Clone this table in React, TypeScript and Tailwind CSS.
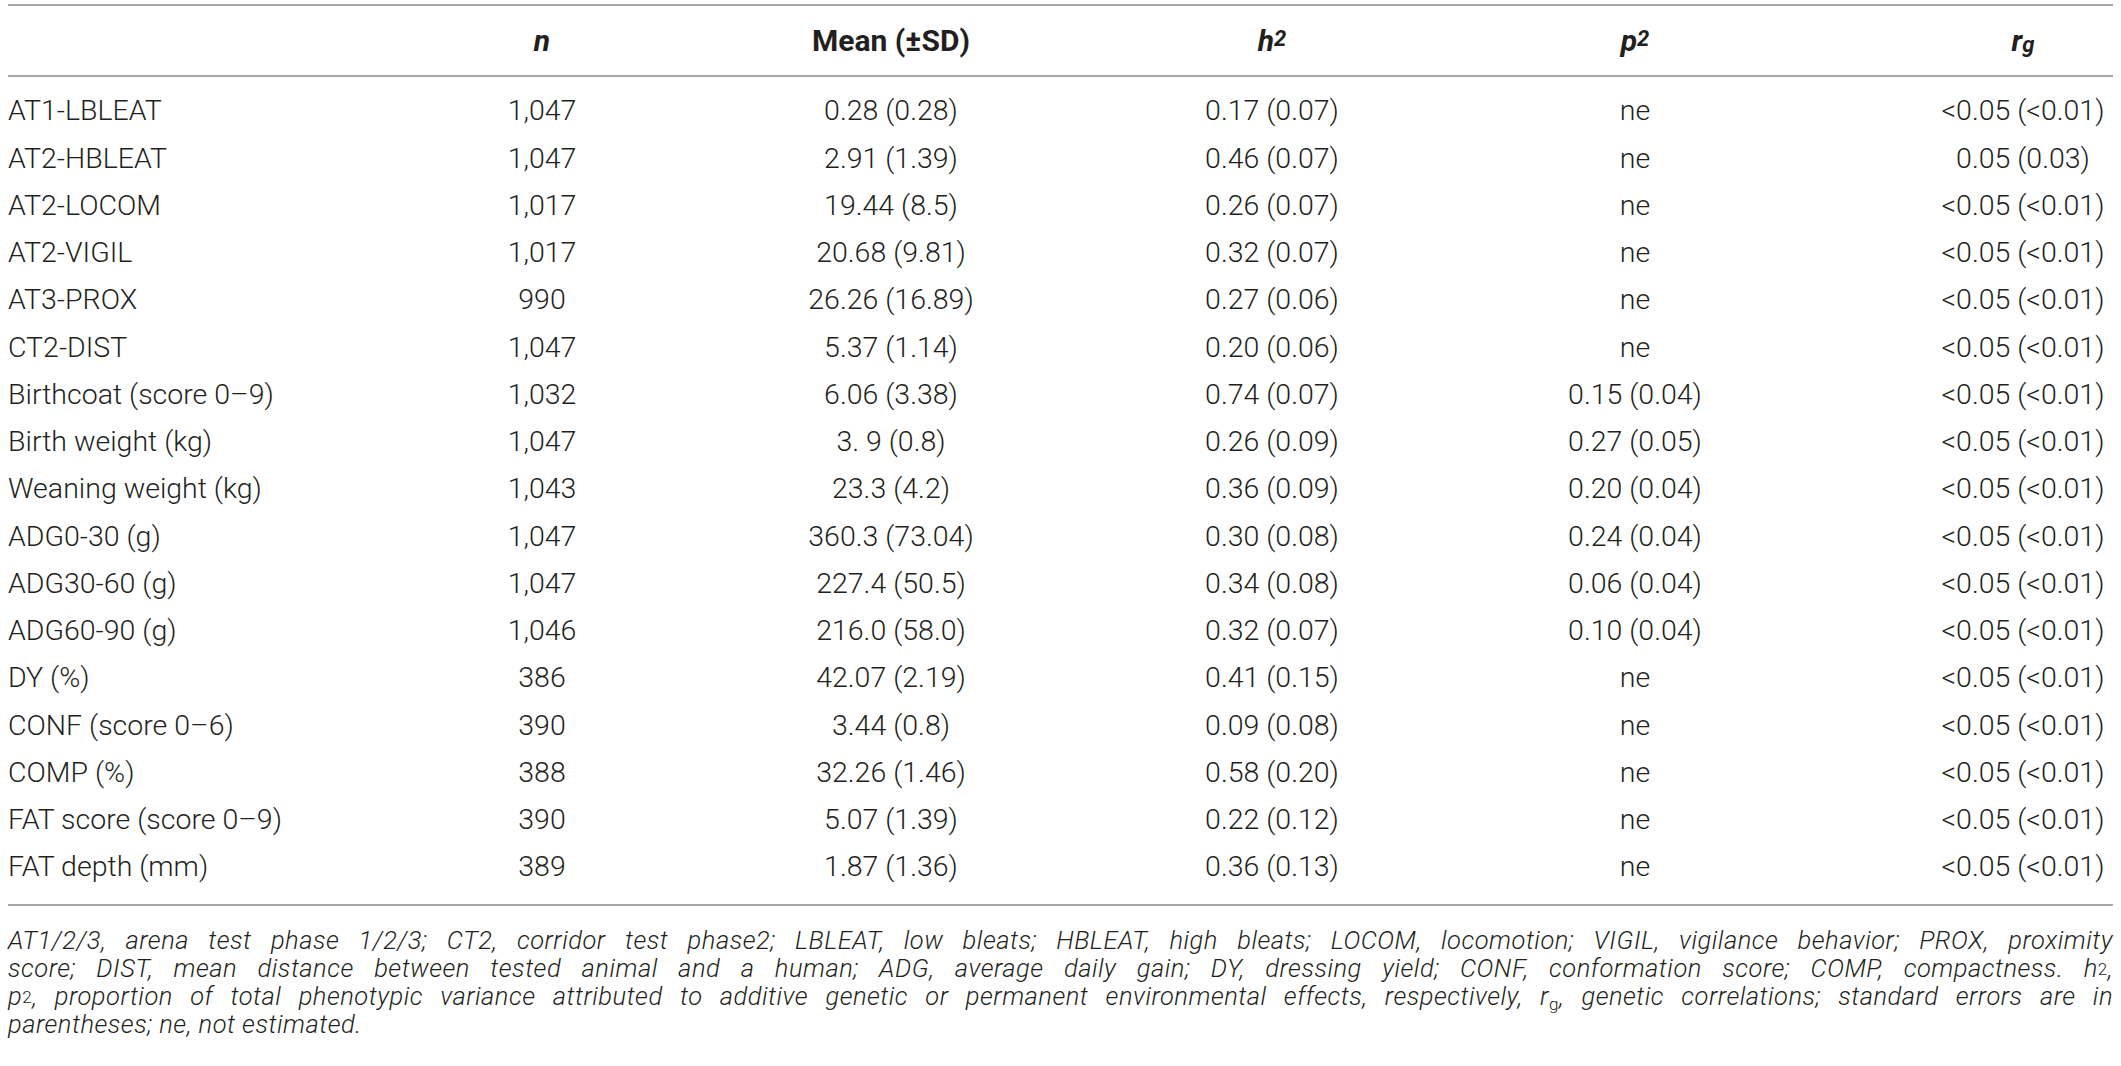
import React from "react";

type Row = [string, string, string, string, string, string];

const rows: Row[] = [
  ["AT1-LBLEAT", "1,047", "0.28 (0.28)", "0.17 (0.07)", "ne", "<0.05 (<0.01)"],
  ["AT2-HBLEAT", "1,047", "2.91 (1.39)", "0.46 (0.07)", "ne", "0.05 (0.03)"],
  ["AT2-LOCOM", "1,017", "19.44 (8.5)", "0.26 (0.07)", "ne", "<0.05 (<0.01)"],
  ["AT2-VIGIL", "1,017", "20.68 (9.81)", "0.32 (0.07)", "ne", "<0.05 (<0.01)"],
  ["AT3-PROX", "990", "26.26 (16.89)", "0.27 (0.06)", "ne", "<0.05 (<0.01)"],
  ["CT2-DIST", "1,047", "5.37 (1.14)", "0.20 (0.06)", "ne", "<0.05 (<0.01)"],
  ["Birthcoat (score 0–9)", "1,032", "6.06 (3.38)", "0.74 (0.07)", "0.15 (0.04)", "<0.05 (<0.01)"],
  ["Birth weight (kg)", "1,047", "3. 9 (0.8)", "0.26 (0.09)", "0.27 (0.05)", "<0.05 (<0.01)"],
  ["Weaning weight (kg)", "1,043", "23.3 (4.2)", "0.36 (0.09)", "0.20 (0.04)", "<0.05 (<0.01)"],
  ["ADG0-30 (g)", "1,047", "360.3 (73.04)", "0.30 (0.08)", "0.24 (0.04)", "<0.05 (<0.01)"],
  ["ADG30-60 (g)", "1,047", "227.4 (50.5)", "0.34 (0.08)", "0.06 (0.04)", "<0.05 (<0.01)"],
  ["ADG60-90 (g)", "1,046", "216.0 (58.0)", "0.32 (0.07)", "0.10 (0.04)", "<0.05 (<0.01)"],
  ["DY (%)", "386", "42.07 (2.19)", "0.41 (0.15)", "ne", "<0.05 (<0.01)"],
  ["CONF (score 0–6)", "390", "3.44 (0.8)", "0.09 (0.08)", "ne", "<0.05 (<0.01)"],
  ["COMP (%)", "388", "32.26 (1.46)", "0.58 (0.20)", "ne", "<0.05 (<0.01)"],
  ["FAT score (score 0–9)", "390", "5.07 (1.39)", "0.22 (0.12)", "ne", "<0.05 (<0.01)"],
  ["FAT depth (mm)", "389", "1.87 (1.36)", "0.36 (0.13)", "ne", "<0.05 (<0.01)"],
];

const gridCols = "grid grid-cols-[501px_66px_632px_130px_596px_180px]";

function Rule() {
  return <div className="h-[2px] bg-[#a8a8a8]" />;
}

function Center({ children, className = "" }: { children: React.ReactNode; className?: string }) {
  return <div className={"flex justify-center whitespace-nowrap " + className}>{children}</div>;
}

export default function App() {
  return (
    <div className="w-[2121px] h-[1066px] overflow-hidden bg-white px-[8px] pt-[4px] text-[#231f20] font-[Roboto,'Helvetica_Neue',Arial,sans-serif]">
      <Rule />
      <div className={gridCols + " h-[69px] items-center text-[30px] font-bold"}>
        <div />
        <Center className="italic">n</Center>
        <Center>Mean (±SD)</Center>
        <Center className="italic">
          <span>
            h<sup className="text-[22px] relative -top-[5px]">2</sup>
          </span>
        </Center>
        <Center className="italic">
          <span>
            p<sup className="text-[22px] relative -top-[5px]">2</sup>
          </span>
        </Center>
        <Center className="italic">
          <span>
            r<sub className="text-[22px] relative top-[1px]">g</sub>
          </span>
        </Center>
      </div>
      <Rule />
      <div className="pt-[11px] pb-[13px] text-[28.5px] font-light">
        {rows.map((r, i) => (
          <div key={i} className={gridCols + " h-[47.25px] items-center"}>
            <div className="whitespace-nowrap">{r[0]}</div>
            <Center>{r[1]}</Center>
            <Center>{r[2]}</Center>
            <Center>{r[3]}</Center>
            <Center>{r[4]}</Center>
            <Center>{r[5]}</Center>
          </div>
        ))}
      </div>
      <Rule />
      <div className="pt-[20px] text-[25.5px] leading-[28px] tracking-[0.5px] font-light italic">
        <p className="text-justify [text-align-last:justify]">
          AT1/2/3, arena test phase 1/2/3; CT2, corridor test phase2; LBLEAT, low bleats; HBLEAT, high bleats; LOCOM, locomotion; VIGIL, vigilance behavior; PROX, proximity
        </p>
        <p className="text-justify [text-align-last:justify]">
          score; DIST, mean distance between tested animal and a human; ADG, average daily gain; DY, dressing yield; CONF, conformation score; COMP, compactness. h
          <sup className="text-[17px] not-italic relative -top-[2px]">2</sup>,
        </p>
        <p className="text-justify [text-align-last:justify]">
          p<sup className="text-[17px] not-italic relative -top-[2px]">2</sup>, proportion of total phenotypic variance attributed to additive genetic or permanent environmental effects, respectively, r
          <sub className="text-[17px] not-italic">g</sub>, genetic correlations; standard errors are in
        </p>
        <p className="text-left">parentheses; ne, not estimated.</p>
      </div>
    </div>
  );
}
